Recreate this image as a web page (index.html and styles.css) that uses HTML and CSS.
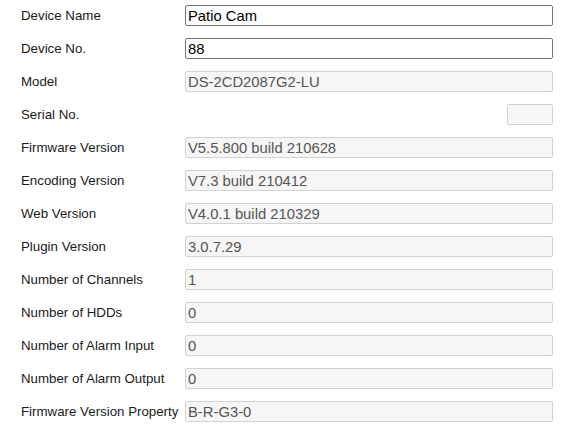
FILE: index.html
```html
<!DOCTYPE html>
<html lang="en">
<head>
    <meta charset="UTF-8">
    <title>Device Information</title>
    <link rel="stylesheet" href="styles.css">
</head>
<body>
    <form class="device-form">
        <label class="field-label" for="devName">Device Name</label>
        <input class="field-input" id="devName" type="text" value="Patio Cam">

        <label class="field-label" for="devNo">Device No.</label>
        <input class="field-input" id="devNo" type="text" value="88">

        <label class="field-label">Model</label>
        <input class="field-input" type="text" value="DS-2CD2087G2-LU" disabled>

        <label class="field-label">Serial No.</label>
        <input class="field-input field-short" type="text" value="" disabled>

        <label class="field-label">Firmware Version</label>
        <input class="field-input" type="text" value="V5.5.800 build 210628" disabled>

        <label class="field-label">Encoding Version</label>
        <input class="field-input" type="text" value="V7.3 build 210412" disabled>

        <label class="field-label">Web Version</label>
        <input class="field-input" type="text" value="V4.0.1 build 210329" disabled>

        <label class="field-label">Plugin Version</label>
        <input class="field-input" type="text" value="3.0.7.29" disabled>

        <label class="field-label">Number of Channels</label>
        <input class="field-input" type="text" value="1" disabled>

        <label class="field-label">Number of HDDs</label>
        <input class="field-input" type="text" value="0" disabled>

        <label class="field-label">Number of Alarm Input</label>
        <input class="field-input" type="text" value="0" disabled>

        <label class="field-label">Number of Alarm Output</label>
        <input class="field-input" type="text" value="0" disabled>

        <label class="field-label">Firmware Version Property</label>
        <input class="field-input" type="text" value="B-R-G3-0" disabled>
    </form>
</body>
</html>
```

FILE: styles.css
```css
body {
    margin: 0;
    background: #fff;
    font-family: 'Liberation Sans', Arial, sans-serif;
}
.device-form {
    display: grid;
    grid-template-columns: 164px 368px;
    grid-auto-rows: 21px;
    row-gap: 12px;
    align-items: center;
    padding: 5px 0 0 21px;
}
.field-label {
    font-size: 13.3px;
    color: #1a1a1a;
    white-space: nowrap;
}
.field-input {
    box-sizing: border-box;
    width: 100%;
    height: 21px;
    margin: 0;
    padding: 0 2px;
    font-family: 'Liberation Sans', Arial, sans-serif;
    font-size: 14.8px;
    color: #000;
    background: #fff;
    border: 1px solid #767676;
    border-radius: 2px;
    outline: none;
}
.field-input:disabled {
    color: #555;
    background: #f6f6f6;
    border-color: #d2d2d2;
}
.field-short {
    width: 46px;
    justify-self: end;
}
```
